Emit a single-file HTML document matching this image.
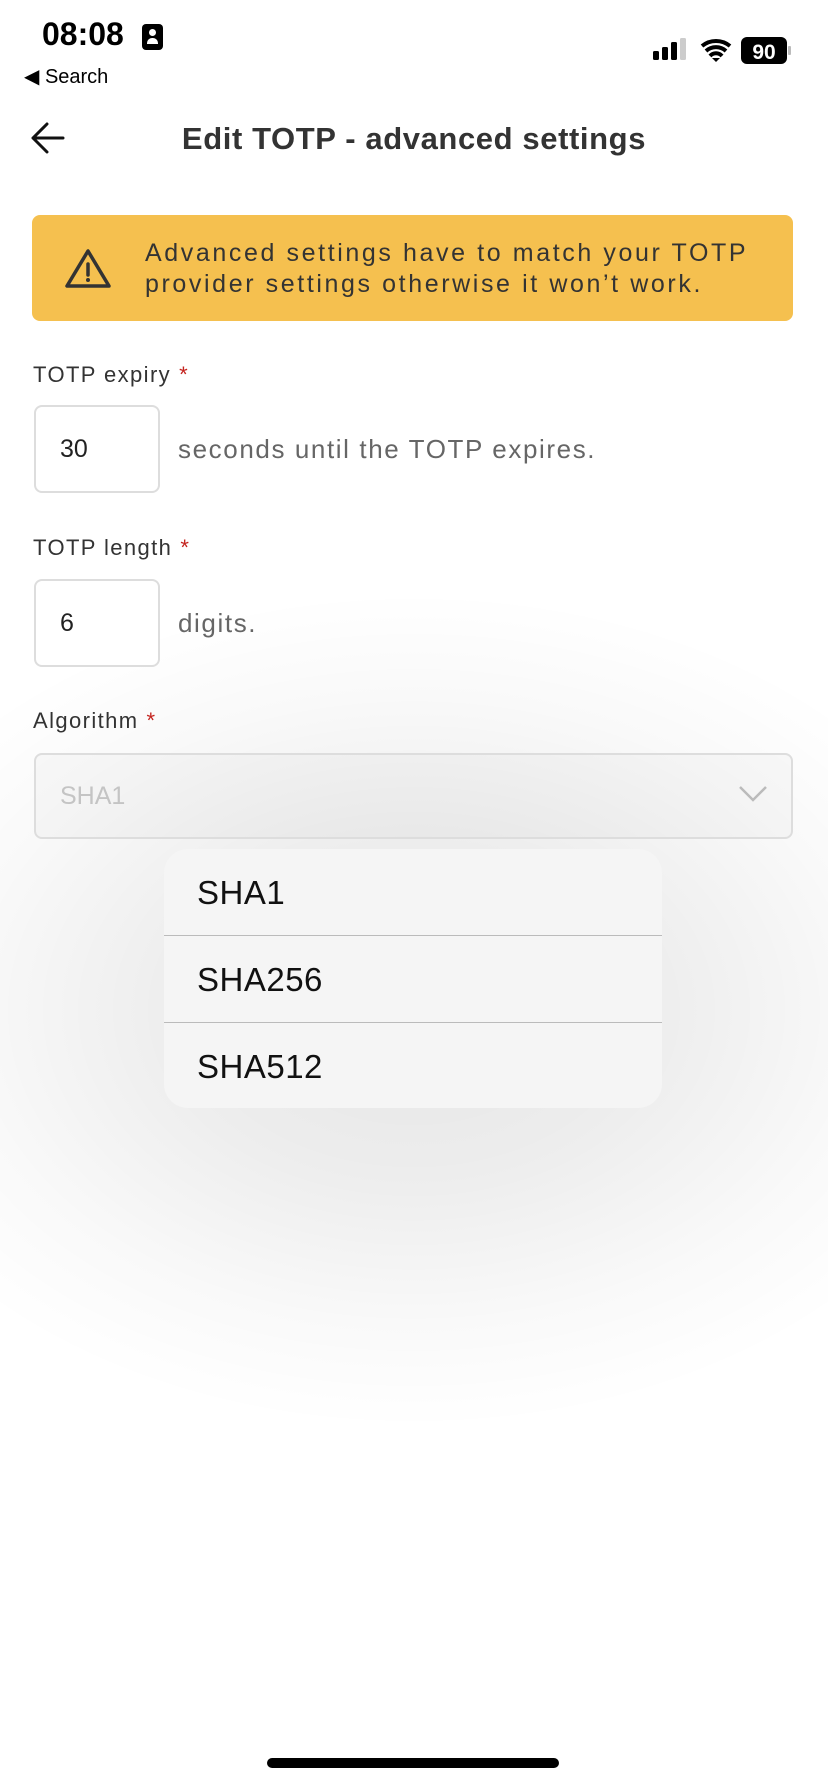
<!DOCTYPE html>
<html><head><meta charset="utf-8"><style>
*{margin:0;padding:0;box-sizing:border-box}
body{width:828px;height:1792px;background:#fff;font-family:"Liberation Sans",sans-serif;position:relative;overflow:hidden;color:#333}
.a{position:absolute}
.lbl{font-size:22px;letter-spacing:1.4px;color:#333;left:33px}
.lbl b{color:#c4231e;font-weight:normal;margin-left:8px}
.inp{left:34px;width:126px;height:88px;border:2px solid #ddd;border-radius:8px;font-size:25px;color:#222;padding-left:24px;line-height:84px;background:#fff}
.hint{left:178px;font-size:26px;letter-spacing:1.6px;color:#666}
.item{position:absolute;left:0;right:0;height:87px;line-height:87px;padding-left:33px;font-size:33px;letter-spacing:0.5px;color:#111}
</style></head><body>
<div class="a" style="left:0;top:560px;width:828px;height:900px;background:radial-gradient(ellipse 600px 420px at 414px 450px,rgba(0,0,0,0.1) 0%,rgba(0,0,0,0.07) 40%,rgba(0,0,0,0.025) 75%,rgba(0,0,0,0) 100%)"></div>
<div class="a" style="left:42px;top:16px;font-size:32px;font-weight:bold;color:#000">08:08</div>
<div class="a" style="left:142px;top:24px;width:21px;height:26px;background:#000;border-radius:4px"><div style="position:absolute;left:7px;top:5px;width:7px;height:7px;border-radius:50%;background:#fff"></div><div style="position:absolute;left:5px;top:14px;width:11px;height:6px;border-radius:5px 5px 0 0;background:#fff"></div></div>
<div class="a" style="left:24px;top:64px;font-size:20px;color:#000">◀ Search</div>
<svg class="a" style="left:650px;top:36px" width="145" height="30">
<rect x="3" y="15" width="6" height="9" rx="1.5"/><rect x="12" y="11" width="6" height="13" rx="1.5"/><rect x="21" y="6" width="6" height="18" rx="1.5"/><rect x="30" y="2" width="6" height="22" rx="1.5" fill="#ccc"/>
<path d="M52 10a22 22 0 0 1 28 0M56 15a15 15 0 0 1 20 0M60 20a8 8 0 0 1 12 0" stroke="#000" stroke-width="4" fill="none"/><path d="M62 22l4 4 4-4z"/>
<rect x="91" y="1" width="46" height="27" rx="6"/><rect x="138" y="10" width="3" height="9" rx="1" fill="#bbb"/>
<text x="114" y="23" font-size="21" font-weight="bold" fill="#fff" text-anchor="middle" font-family="Liberation Sans">90</text></svg>
<svg class="a" style="left:30px;top:122px" width="36" height="32"><path d="M3 16H33M17 2L3 16l14 14" stroke="#111" stroke-width="3" fill="none" stroke-linecap="round" stroke-linejoin="round"/></svg>
<div class="a" style="left:0;width:828px;top:121px;text-align:center;font-size:31px;letter-spacing:0.6px;font-weight:bold;color:#333">Edit TOTP - advanced settings</div>
<div class="a" style="left:32px;top:215px;width:761px;height:106px;background:#f5c04f;border-radius:8px"></div>
<svg class="a" style="left:64px;top:247px" width="48" height="44"><path d="M24 4L3 39h42z" stroke="#333" stroke-width="3.5" fill="none" stroke-linejoin="round"/><path d="M24 17v11" stroke="#333" stroke-width="3.5" stroke-linecap="round"/><circle cx="24" cy="33" r="2" fill="#333"/></svg>
<div class="a" style="left:145px;top:238px;font-size:25px;letter-spacing:2.6px;line-height:31px;color:#333;white-space:nowrap">Advanced settings have to match your TOTP<br>provider settings otherwise it won’t work.</div>
<div class="a lbl" style="top:362px">TOTP expiry<b>*</b></div>
<div class="a inp" style="top:405px">30</div>
<div class="a hint" style="top:434px">seconds until the TOTP expires.</div>
<div class="a lbl" style="top:535px">TOTP length<b>*</b></div>
<div class="a inp" style="top:579px">6</div>
<div class="a hint" style="top:608px">digits.</div>
<div class="a lbl" style="top:708px">Algorithm<b>*</b></div>
<div class="a" style="left:34px;top:753px;width:759px;height:86px;border:2px solid #ddd;border-radius:8px;font-size:25px;color:#c4c4c4;padding-left:24px;line-height:82px;background:rgba(0,0,0,0.02)">SHA1</div>
<svg class="a" style="left:738px;top:785px" width="30" height="18"><path d="M2 2l13 13L28 2" stroke="#bbb" stroke-width="2.5" fill="none"/></svg>
<div class="a" style="left:164px;top:849px;width:498px;height:259px;background:#f5f5f5;border-radius:24px">
<div class="item" style="top:0;border-bottom:1px solid #bbb">SHA1</div>
<div class="item" style="top:87px;border-bottom:1px solid #bbb">SHA256</div>
<div class="item" style="top:174px">SHA512</div>
</div>
<div class="a" style="left:267px;top:1758px;width:292px;height:10px;border-radius:5px;background:#000"></div>
</body></html>
